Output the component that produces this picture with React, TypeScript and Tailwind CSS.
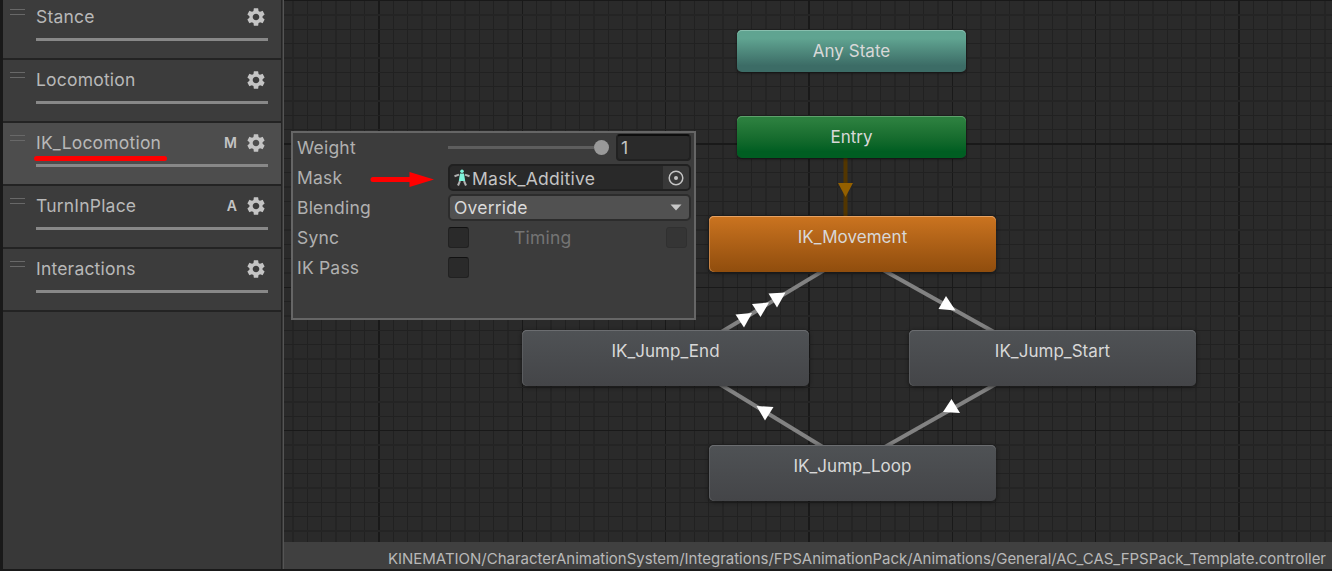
import React from "react";

type Layer = { name: string; flag?: string; active?: boolean; marked?: boolean };

const layers: Layer[] = [
  { name: "Stance" },
  { name: "Locomotion" },
  { name: "IK_Locomotion", flag: "M", active: true, marked: true },
  { name: "TurnInPlace", flag: "A" },
  { name: "Interactions" },
];

function Gear() {
  return (
    <svg className="size-[22px] shrink-0" viewBox="0 0 24 24" fill="#c4c4c4">
      <path d="M19.14 12.94c.04-.3.06-.61.06-.94 0-.32-.02-.64-.07-.94l2.03-1.58a.49.49 0 0 0 .12-.61l-1.92-3.32a.488.488 0 0 0-.59-.22l-2.39.96c-.5-.38-1.03-.7-1.62-.94l-.36-2.54a.484.484 0 0 0-.48-.41h-3.84c-.24 0-.43.17-.47.41l-.36 2.54c-.59.24-1.13.57-1.62.94l-2.39-.96c-.22-.08-.47 0-.59.22L2.74 8.87c-.12.21-.08.47.12.61l2.03 1.58c-.05.3-.09.63-.09.94s.02.64.07.94l-2.03 1.58a.49.49 0 0 0-.12.61l1.92 3.32c.12.22.37.29.59.22l2.39-.96c.5.38 1.03.7 1.62.94l.36 2.54c.05.24.24.41.48.41h3.84c.24 0 .44-.17.47-.41l.36-2.54c.59-.24 1.13-.56 1.62-.94l2.39.96c.22.08.47 0 .59-.22l1.92-3.32c.12-.22.07-.47-.12-.61l-2.01-1.58zM12 15.6c-1.98 0-3.6-1.62-3.6-3.6s1.62-3.6 3.6-3.6 3.6 1.62 3.6 3.6-1.62 3.6-3.6 3.6z" />
    </svg>
  );
}

function LayerRow({ layer, first }: { layer: Layer; first: boolean }) {
  return (
    <div
      className={`flex shrink-0 border-b-2 border-[#232323] ${first ? "h-[60px]" : "h-[63px]"} ${
        layer.active ? "bg-[#4d4d4d]" : "bg-[#3c3c3c]"
      }`}
    >
      <div className={`ml-[7px] h-[6px] w-[15px] border-y border-[#686868] ${first ? "mt-[9px]" : "mt-3"}`} />
      <div className={`ml-[11px] w-[232px] ${first ? "" : "pt-[3px]"}`}>
        <div className="flex h-[34px] items-center">
          <span className="relative text-[17.5px] leading-none tracking-[0.2px] text-[#b8b8b8]">
            {layer.name}
            {layer.marked && (
              <span className="absolute -left-[2px] top-[22px] h-[5px] w-[133px] rounded-full bg-[#ff0000]" />
            )}
          </span>
          <span className="ml-auto mr-2 text-[14px] font-semibold leading-none text-[#c4c4c4]">{layer.flag}</span>
          <span className="mr-[1px]">
            <Gear />
          </span>
        </div>
        <div className="mt-[4px] h-[3px] bg-[#888888]" />
      </div>
    </div>
  );
}

function Grid() {
  const lines: React.ReactNode[] = [];
  for (let k = -10; k <= 67; k++) {
    const wide = k % 3 === 0;
    const major = k % 10 === 0;
    const x = 379 + (k * 43) / 3 - 284;
    lines.push(
      <rect
        key={`v${k}`}
        x={wide ? Math.round(x) - 1 : Math.floor(x)}
        y={0}
        width={wide ? 2 : 1}
        height={543}
        fill={major ? "#191919" : wide ? "#242424" : "#212121"}
      />,
    );
  }
  for (let k = -10; k <= 27; k++) {
    const wide = k % 3 === 0;
    const major = k % 10 === 0;
    const y = 144 + (k * 43) / 3;
    lines.push(
      <rect
        key={`h${k}`}
        x={0}
        y={wide ? Math.round(y) - 1 : Math.floor(y)}
        width={1048}
        height={wide ? 2 : 1}
        fill={major ? "#191919" : wide ? "#242424" : "#212121"}
      />,
    );
  }
  return <>{lines}</>;
}

function Wires() {
  return (
    <svg className="absolute left-0 top-0" width="1048" height="543">
      <Grid />
      <g transform="translate(-284 0)">
        <path d="M845.5 155V218" stroke="#533600" strokeWidth="4" />
        <path d="M838 183h15l-7.500 14z" fill="#946000" />
        <g stroke="#828282" strokeWidth="4">
          <path d="M713 337L831 266" />
          <path d="M876 266L1003 337" />
          <path d="M1003 380L876 452" />
          <path d="M831 452L713 380" />
        </g>
        <g fill="#ffffff">
          <path d="M735.500 314.500L752 313L744 327.500z" />
          <path d="M752 304L769 302.500L760.500 317z" />
          <path d="M768.500 293.500L785.500 292.500L777 307.500z" />
          <path d="M946 296L955.500 310.500L938.500 309z" />
          <path d="M951.500 399L960 413L943 412z" />
          <path d="M756.500 406L773.500 407L765 420.500z" />
        </g>
      </g>
    </svg>
  );
}

function StateNode({ label, className }: { label: string; className: string }) {
  return (
    <div
      className={`absolute flex justify-center rounded-[5px] pt-3 text-[17px] leading-[18px] tracking-[0.04px] text-[#d8d8d8] ${className}`}
    >
      {label}
    </div>
  );
}

const gray =
  "h-[56px] w-[287px] bg-linear-to-b from-[#4f5255] to-[#444548] shadow-[inset_0_1px_0_#6b6d70,inset_1px_0_0_#5a5c5f,0_1px_4px_#0c0c0cb0]";
const small = "h-[42px] w-[229px]";

function CheckBox({ dim }: { dim?: boolean }) {
  return (
    <span
      className={`-mt-[2px] block size-[21px] rounded-[3px] border ${
        dim ? "border-[#303030] bg-[#353535]" : "border-[#212121] border-t-[#111111] bg-[#2a2a2a]"
      }`}
    />
  );
}

function Field({ label, children }: { label: string; children: React.ReactNode }) {
  return (
    <div className="flex h-[30px] items-center">
      <span className="w-[151px] shrink-0 text-[17.5px] leading-none tracking-[0.2px] text-[#b0b0b0]">{label}</span>
      {children}
    </div>
  );
}

function LayerSettings() {
  return (
    <div className="absolute left-[291px] top-[131px] h-[189px] w-[405px] border-2 border-[#666666] bg-[#3c3c3c] pl-1">
      <Field label="Weight">
        <span className="-mt-[2px] flex w-[162px] items-center">
          <span className="h-[3px] w-[146px] bg-[#5e5e5e]" />
          <span className="size-[15px] rounded-full bg-[#999999]" />
        </span>
        <span className="-mt-[1px] ml-[6px] flex h-[27px] w-[75px] items-center rounded-[4px] border-2 border-[#212121] border-t-[#0d0d0d] bg-[#2a2a2a] pl-[3px] text-[17.5px] leading-none text-[#c4c4c4]">
          1
        </span>
      </Field>
      <Field label="Mask">
        <span className="-mt-[1px] flex h-[27px] w-[243px] items-center overflow-hidden rounded-[5px] border-2 border-[#202020] bg-[#292929]">
          <svg className="ml-1 h-[17px] w-4 shrink-0" viewBox="0 0 16 17">
            <g stroke="#b0b0b0" strokeWidth="2">
              <line x1="0.5" y1="7.2" x2="5" y2="5.6" />
              <line x1="15.5" y1="7.2" x2="11" y2="5.6" />
              <line x1="6" y1="12" x2="4" y2="16.5" />
              <line x1="10" y1="12" x2="12" y2="16.5" />
            </g>
            <circle cx="8" cy="2.200" r="1.800" fill="#7ff5dc" />
            <path d="M6 4.500h4l1.200 7.500H4.800z" fill="#7ff5dc" />
          </svg>
          <span className="ml-[2px] pt-[2px] text-[17.5px] leading-none tracking-[0.25px] text-[#c4c4c4]">
            Mask_Additive
          </span>
          <span className="ml-auto flex h-full w-[26px] items-center justify-center bg-[#383838]">
            <svg className="size-4" viewBox="0 0 16 16">
              <circle cx="8" cy="8" r="6.800" fill="none" stroke="#c4c4c4" strokeWidth="1.500" />
              <circle cx="8" cy="8" r="2" fill="#c4c4c4" />
            </svg>
          </span>
        </span>
      </Field>
      <Field label="Blending">
        <span className="-mt-[1px] flex h-[27px] w-[243px] items-center rounded-[5px] border-2 border-[#2c2c2c] bg-[#515151] pl-1 pr-[7px] text-[17.5px] leading-none tracking-[0.2px] text-[#dadada]">
          Override
          <svg className="ml-auto h-[7px] w-3" viewBox="0 0 12 7">
            <path d="M0.500 0.500h11L6 6.500z" fill="#c8c8c8" />
          </svg>
        </span>
      </Field>
      <Field label="Sync">
        <CheckBox />
        <span className="ml-[45px] w-[152px] text-[17.5px] leading-none tracking-[0.2px] text-[#747474]">Timing</span>
        <CheckBox dim />
      </Field>
      <Field label="IK Pass">
        <CheckBox />
      </Field>
      <svg className="absolute left-[77px] top-[38px]" width="64" height="16" viewBox="0 0 64 16">
        <path d="M3 8.500H42" stroke="#ff0000" strokeWidth="5" strokeLinecap="round" />
        <path d="M39.500 1L64 8.500L39.500 16z" fill="#ff0000" />
      </svg>
    </div>
  );
}

export default function App() {
  return (
    <div className="relative flex h-[571px] w-[1332px] flex-col overflow-hidden bg-[#191919] font-['Inter',sans-serif]">
      <div className="flex h-[569px] pl-[3px]">
        <aside className="flex w-[278px] shrink-0 flex-col bg-[#383838]">
          {layers.map((layer, i) => (
            <LayerRow key={layer.name} layer={layer} first={i === 0} />
          ))}
        </aside>
        <div className="w-[3px] shrink-0 border-x border-l-[#242424] border-r-[#555555] bg-[#383838]" />
        <main className="flex min-w-0 flex-1 flex-col">
          <div className="relative h-[542px] shrink-0 overflow-hidden bg-[#2a2a2a]">
            <Wires />
            <StateNode
              label="Any State"
              className={`left-[453px] top-[30px] bg-linear-to-b from-[#60a491] from-20% to-[#3c6c66] to-85% shadow-[inset_0_1px_0_#88bfae,0_1px_3px_#0c0c0cb0] ${small}`}
            />
            <StateNode
              label="Entry"
              className={`left-[453px] top-[116px] bg-linear-to-b from-[#2b7f3e] from-10% to-[#005e22] to-85% shadow-[inset_0_1px_0_#5ea26c,0_1px_3px_#0c0c0cb0] ${small}`}
            />
            <StateNode
              label="IK_Movement"
              className="left-[425px] top-[216px] h-[56px] w-[287px] bg-linear-to-b from-[#cb7420] to-[#904d0d] shadow-[inset_0_1px_0_#e6a263,inset_1px_0_0_#c78446,0_1px_4px_#0c0c0cb0]"
            />
            <StateNode label="IK_Jump_End" className={`left-[238px] top-[330px] ${gray}`} />
            <StateNode label="IK_Jump_Start" className={`left-[625px] top-[330px] ${gray}`} />
            <StateNode label="IK_Jump_Loop" className={`left-[425px] top-[445px] ${gray}`} />
          </div>
          <footer className="flex flex-1 items-center justify-end bg-[#404040] pr-[6px] pt-[6px] text-[15px] leading-none tracking-[-0.015px] text-[#b8b8b8]">
            KINEMATION/CharacterAnimationSystem/Integrations/FPSAnimationPack/Animations/General/AC_CAS_FPSPack_Template.controller
          </footer>
        </main>
      </div>
      <LayerSettings />
    </div>
  );
}
